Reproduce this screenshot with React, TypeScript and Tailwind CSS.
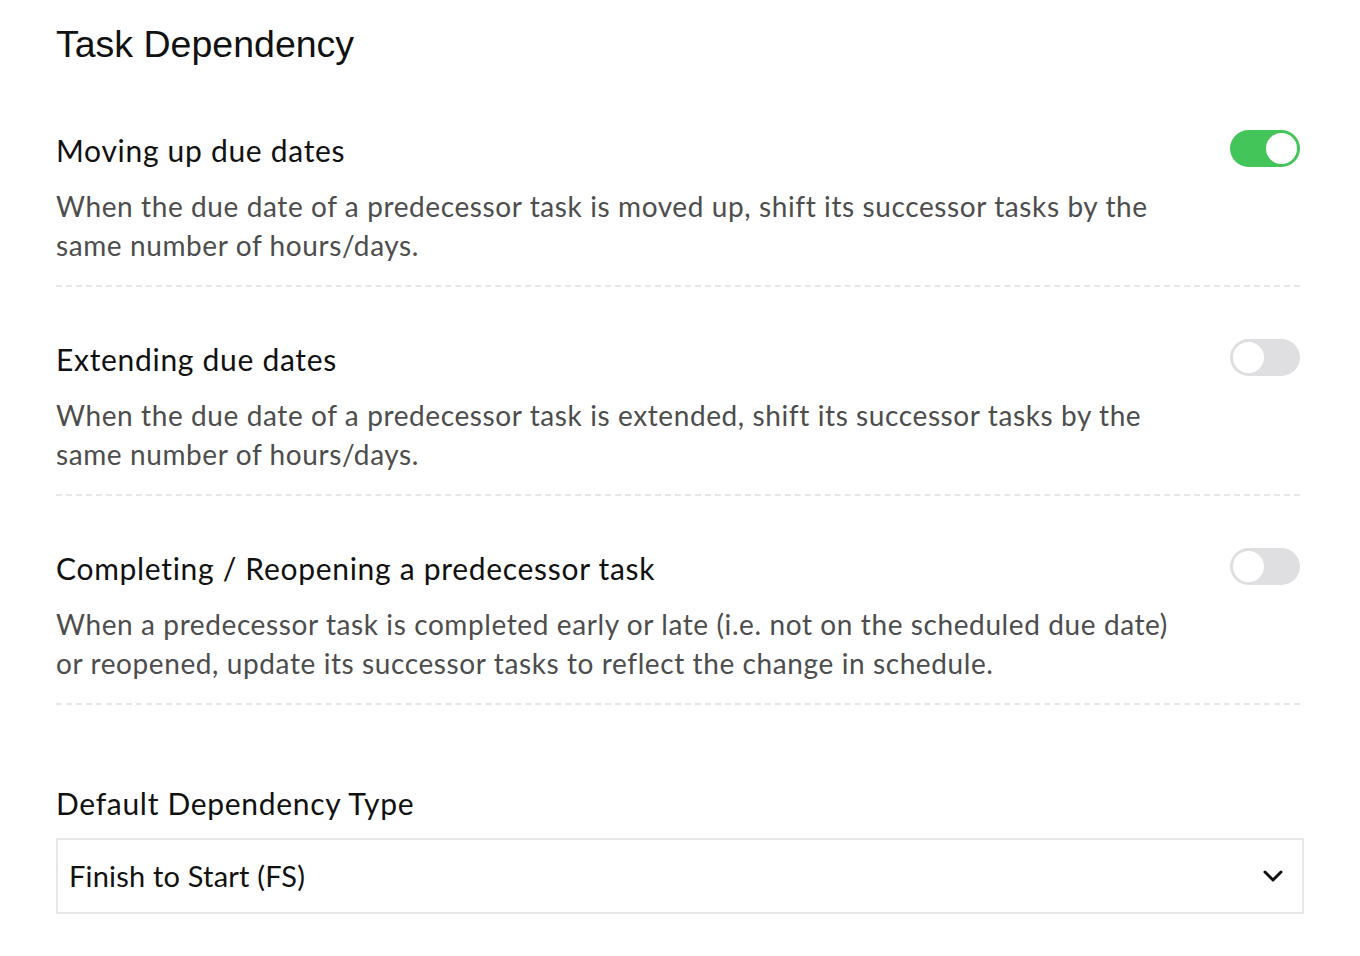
import { useState } from "react";

const settings = [
  {
    title: "Moving up due dates",
    desc: "When the due date of a predecessor task is moved up, shift its successor tasks by the same number of hours/days.",
    on: true,
  },
  {
    title: "Extending due dates",
    desc: "When the due date of a predecessor task is extended, shift its successor tasks by the same number of hours/days.",
    on: false,
  },
  {
    title: "Completing / Reopening a predecessor task",
    desc: "When a predecessor task is completed early or late (i.e. not on the scheduled due date) or reopened, update its successor tasks to reflect the change in schedule.",
    on: false,
  },
];

const Toggle = ({ on, onClick }: { on: boolean; onClick: () => void }) => (
  <button
    onClick={onClick}
    className={`-mt-[3px] flex h-[37px] w-[70px] shrink-0 items-center rounded-full p-[3px] ${
      on ? "justify-end bg-[#44c55a]" : "justify-start bg-[#dfdfe2]"
    }`}
  >
    <span className="h-[31px] w-[31px] rounded-full bg-white" />
  </button>
);

const App = () => {
  const [state, setState] = useState(settings.map((s) => s.on));

  return (
    <div className="min-h-screen bg-white pl-[56px] pr-[56px] pt-[22px] font-['Lato',sans-serif]">
      <h1 className="font-['Liberation_Sans',Arial,sans-serif] text-[37.5px] leading-[44px] text-[#111]">
        Task Dependency
      </h1>
      <div className="mt-[12px] w-[1244px]">
        {settings.map((s, i) => (
          <div key={s.title} className="border-b-2 border-dashed border-[#e6e6e6] pb-[20px] pt-[52px]">
            <div className="flex items-center justify-between">
              <h2 className="text-[30px] leading-[40px] tracking-[0.7px] text-[#111]">{s.title}</h2>
              <Toggle
                on={state[i]}
                onClick={() => setState(state.map((v, j) => (j === i ? !v : v)))}
              />
            </div>
            <p className="mt-[17px] max-w-[1130px] text-[28px] leading-[39px] tracking-[0.6px] text-[#4d4d4d]">
              {s.desc}
            </p>
          </div>
        ))}
      </div>
      <div className="mt-[78px] w-[1248px]">
        <div className="text-[30px] leading-[40px] tracking-[0.7px] text-[#111]">Default Dependency Type</div>
        <div className="mt-[15px] flex h-[76px] items-center justify-between border-2 border-[#e8e8e8] pl-[11px] pr-[18px]">
          <span className="text-[29px] tracking-[0.2px] text-[#111]">Finish to Start (FS)</span>
          <svg width="22" height="14" viewBox="0 0 22 14" fill="none">
            <path d="M3 3l8 8 8-8" stroke="#111" strokeWidth="3" strokeLinecap="round" strokeLinejoin="round" />
          </svg>
        </div>
      </div>
    </div>
  );
};

export default App;
